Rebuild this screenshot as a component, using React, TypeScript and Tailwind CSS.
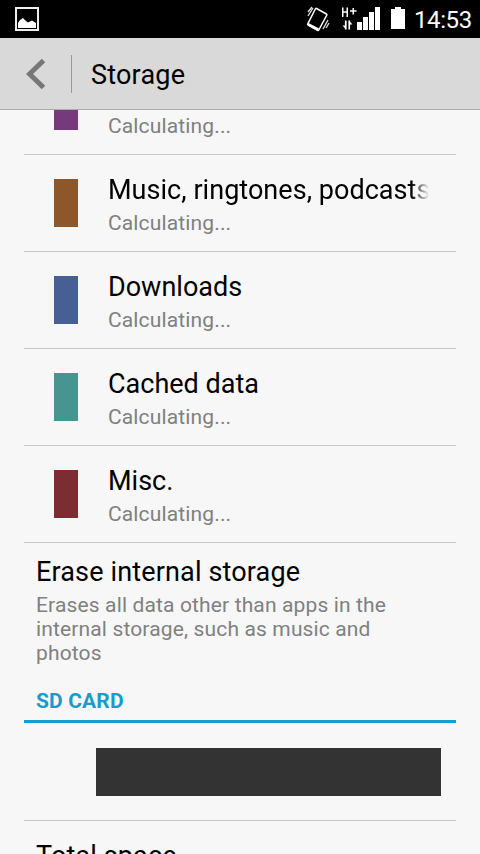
const categories = [
  { name: 'Music, ringtones, podcasts', color: 'bg-[#8c572a]', fade: true },
  { name: 'Downloads', color: 'bg-[#466093]' },
  { name: 'Cached data', color: 'bg-[#489491]' },
  { name: 'Misc.', color: 'bg-[#7c2d31]' },
];

function StatusBar() {
  return (
    <div className="h-[38px] shrink-0 bg-black text-white flex items-center justify-between pl-[15px]">
      <svg width="24" height="24" viewBox="0 0 24 24" fill="none">
        <rect x="1" y="1" width="22" height="22" stroke="#eee" strokeWidth="2" />
        <path d="M3 21v-5l2-3 3-2 3 3 2 1.500 4-2 4 2.500v5z" fill="#fff" />
      </svg>
      <div className="w-[174px] flex items-center">
        <svg width="99" height="38" viewBox="0 0 99 38" fill="none" className="shrink-0">
          {/* vibrate */}
          <path d="M10.500 8.500l10 5.500q.7.500.3 1.200l-8 14.800q-.4.700-1.200.3l-9.500-5.300q-.7-.400-.3-1.200l7.500-14.800q.4-.900 1.200-.5z" stroke="#fff" strokeWidth="1.500" />
          <path d="M2.500 23l10.500 5.500-1.500 2.500-9.500-5.500z" fill="#fff" />
          <path d="M2 12l4-5M2 16l5-8M17 29l5-9M20 28l3-5" stroke="#ddd" strokeWidth="1.400" />
          {/* network type */}
          <path d="M36.750 7.500v9.500M41.250 7.500v9.500M36.500 12h5M44 11h6.500M47.250 8v6.500" stroke="#fff" strokeWidth="1.500" />
          <path d="M39.750 20.500v9M43.250 20.500v9" stroke="#fff" strokeWidth="1.700" />
          <path d="M36.500 25.500h3.500v4zM46.500 24.500h-3.500v-4z" fill="#fff" />
          {/* signal */}
          <path d="M51 22h5v8h-5zM57 17h5v13h-5zM63 12h5v18h-5zM69 7h5v23h-5z" fill="#fff" />
          {/* battery */}
          <path d="M85 9h4V7h6v2h4v20H85z" fill="#fff" />
        </svg>
        <span className="ml-[9px] text-[24px] leading-[38px] tracking-[-0.4px] translate-y-px">14:53</span>
      </div>
    </div>
  );
}

function ActionBar() {
  return (
    <div className="h-[72px] shrink-0 bg-[#d9d9d9] border-b border-[#aaa] flex items-center">
      <svg width="20" height="32" viewBox="0 0 20 32" fill="none" className="ml-[26px]">
        <path d="M17.500 2.500L3.500 16l14 13.500" stroke="#777" strokeWidth="5" />
      </svg>
      <div className="ml-[25px] w-px h-[38px] bg-[#999]" />
      <h1 className="ml-[19px] text-[27px] leading-8 tracking-[0.2px] translate-y-px">Storage</h1>
    </div>
  );
}

type RowProps = { name: string; color: string; fade?: boolean };

function CategoryRow({ name, color, fade }: RowProps) {
  return (
    <div className="h-[97px] shrink-0 border-b border-[#c6c6c6] flex items-center pl-[30px] pr-[27px]">
      <div className={`w-6 h-12 shrink-0 ${color}`} />
      <div className="ml-[30px] pt-[3px] flex-1 min-w-0">
        <div
          className={
            fade
              ? 'text-[27px] leading-8 tracking-[0.04px] whitespace-nowrap overflow-hidden [mask-image:linear-gradient(to_right,black_calc(100%-18px),transparent)]'
              : 'text-[27px] leading-8 whitespace-nowrap'
          }
        >
          {name}
        </div>
        <div className="mt-[5px] text-[21px] leading-6 tracking-[0.14px] text-[#808080]">Calculating...</div>
      </div>
    </div>
  );
}

export default function App() {
  return (
    <div className="w-[480px] h-[854px] overflow-hidden flex flex-col bg-[#f7f7f7] text-black font-[Roboto,sans-serif]">
      <StatusBar />
      <ActionBar />
      <div className="flex-1 min-h-0 overflow-hidden flex flex-col px-6">
        {/* row scrolled partly under the action bar */}
        <div className="h-[45px] shrink-0 border-b border-[#c6c6c6] flex items-start pl-[30px]">
          <div className="w-6 h-5 bg-[#763a7c]" />
          <div className="ml-[30px] mt-1 text-[21px] leading-6 tracking-[0.14px] text-[#808080]">Calculating...</div>
        </div>
        {categories.map((item) => (
          <CategoryRow key={item.name} {...item} />
        ))}

        <div className="h-[133px] shrink-0 pl-3 pr-12 pt-[13px]">
          <div className="text-[27px] leading-8 tracking-[0.15px]">Erase internal storage</div>
          <p className="mt-[5px] text-[21px] leading-6 tracking-[0.14px] text-[#808080]">
            Erases all data other than apps in the internal storage, such as music and photos
          </p>
        </div>

        <div className="h-[47px] shrink-0 border-b-[3px] border-[#1b9cc6] pl-3 pt-[13px] text-[21px] leading-6 tracking-[0.14px] font-bold text-[#1b9cc6]">
          SD CARD
        </div>

        <div className="h-[98px] shrink-0 border-b border-[#c6c6c6] flex items-center pl-[72px] pr-[15px]">
          <div className="w-full h-12 bg-[#333]" />
        </div>
        <div className="shrink-0 pl-3 pt-[19px] text-[27px] leading-8 tracking-[0.13px]">Total space</div>
      </div>
    </div>
  );
}
